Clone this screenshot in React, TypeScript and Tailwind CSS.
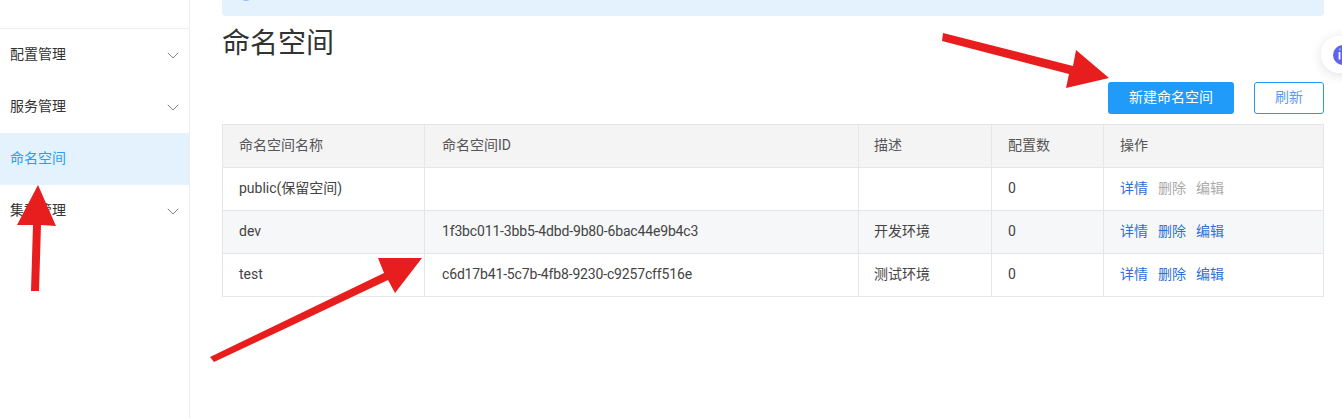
const font = "font-['Roboto','Noto_Sans_CJK_SC',sans-serif]";

function Chevron() {
  return (
    <svg width="12" height="7" viewBox="0 0 12 7" fill="none" stroke="#7f8694" strokeWidth="1">
      <path d="M0.8 0.8 L6 6 L11.2 0.8" />
    </svg>
  );
}

function NavItem({ label, active, chevron }: { label: string; active?: boolean; chevron?: boolean }) {
  return (
    <div className={`flex h-[52px] items-center justify-between pl-[10px] pr-[10px] text-[14px] ${active ? "bg-[#e4f2fe] text-[#2a9df4]" : "text-[#333]"}`}>
      <span className="-translate-y-px">{label}</span>
      {chevron && <Chevron />}
    </div>
  );
}

const rows = [
  { name: "public(保留空间)", id: "", desc: "", n: "0", locked: true, bg: "bg-white" },
  { name: "dev", id: "1f3bc011-3bb5-4dbd-9b80-6bac44e9b4c3", desc: "开发环境", n: "0", locked: false, bg: "bg-[#f6f7f9]" },
  { name: "test", id: "c6d17b41-5c7b-4fb8-9230-c9257cff516e", desc: "测试环境", n: "0", locked: false, bg: "bg-white" },
];

const grid = "grid grid-cols-[202px_434px_133px_112px_1fr]";
const cell = "flex h-[42px] items-center pb-[2px] border-r border-[#e6e6e6] last:border-r-0";

export default function App() {
  return (
    <div className={`${font} relative flex h-[418px] w-[1342px] overflow-hidden bg-white`}>
      <aside className="h-full w-[190px] shrink-0 border-r border-[#eceef1] pt-[28px]">
        <div className="border-t border-[#eceef1]">
          <NavItem label="配置管理" chevron />
          <NavItem label="服务管理" chevron />
          <NavItem label="命名空间" active />
          <NavItem label="集群管理" chevron />
        </div>
      </aside>

      <main className="ml-[32px] w-[1102px] shrink-0">
        <div className="relative h-[16px] overflow-hidden rounded-b-[4px] bg-[#e4f2fe]">
          <span className="absolute left-[17px] top-[-13px] h-[14px] w-[14px] rounded-full bg-[#8fbcf5]" />
        </div>
        <h1 className="mt-[10px] h-[36px] text-[28px] leading-[36px] font-normal text-[#333]">命名空间</h1>
        <div className="mt-[20px] flex justify-end gap-[20px]">
          <button className="h-[32px] w-[126px] rounded-[3px] bg-[#209bfa] pb-[2px] text-[14px] text-white">新建命名空间</button>
          <button className="h-[32px] w-[70px] rounded-[3px] border border-[#209bfa] bg-white pb-[2px] text-[14px] text-[#5a9cf0]">刷新</button>
        </div>
        <div className="mt-[10px] border border-[#e6e6e6] text-[14px] text-[#444]">
          <div className={`${grid} bg-[#f4f4f5]`}>
            {["命名空间名称", "命名空间ID", "描述", "配置数", "操作"].map((h, i) => (
              <div key={h} className={`${cell} ${i === 1 ? "pl-[17px]" : i === 2 ? "pl-[15px]" : "pl-[16px]"} text-[#555]`}>{h}</div>
            ))}
          </div>
          {rows.map((r) => (
            <div key={r.name} className={`${grid} ${r.bg} border-t border-[#e6e6e6]`}>
              <div className={`${cell} pl-[16px]`}>{r.name}</div>
              <div className={`${cell} pl-[17px] tracking-[-0.16px]`}>{r.id}</div>
              <div className={`${cell} pl-[15px]`}>{r.desc}</div>
              <div className={`${cell} pl-[16px]`}>{r.n}</div>
              <div className={`${cell} gap-[10px] pl-[16px]`}>
                <span className="text-[#2f6fd6]">详情</span>
                <span className={r.locked ? "text-[#aaaaaa]" : "text-[#2f6fd6]"}>删除</span>
                <span className={r.locked ? "text-[#aaaaaa]" : "text-[#2f6fd6]"}>编辑</span>
              </div>
            </div>
          ))}
        </div>
      </main>

      <div className="absolute left-[1321px] top-[36px] flex h-[37px] w-[40px] items-center rounded-l-[18px] bg-white pl-[12px] shadow-[0_2px_12px_rgba(0,0,0,0.12)]">
        <svg width="20" height="20" viewBox="0 0 20 20" className="shrink-0">
          <circle cx="10" cy="10" r="10" fill="#5f63ee" />
          <rect x="6" y="3.5" width="1.6" height="1.8" fill="#6fe0f5" />
          <path d="M5.6 7h1.8v7.5H5.6z" fill="#ffffff" />
        </svg>
      </div>

      <svg className="pointer-events-none absolute left-0 top-0" width="1342" height="418" viewBox="0 0 1342 418">
        <g fill="#e81e1e">
          <polygon points="31,291 39,291 41,225 56,226 38,185 17,225 33,225" />
          <polygon points="943,33 942,41 1069,74 1066,88 1109,78 1076,50 1073,66" />
          <polygon points="210,357 214,362 388,280 395,293 422,258 378,258 384,273" />
        </g>
      </svg>
    </div>
  );
}
